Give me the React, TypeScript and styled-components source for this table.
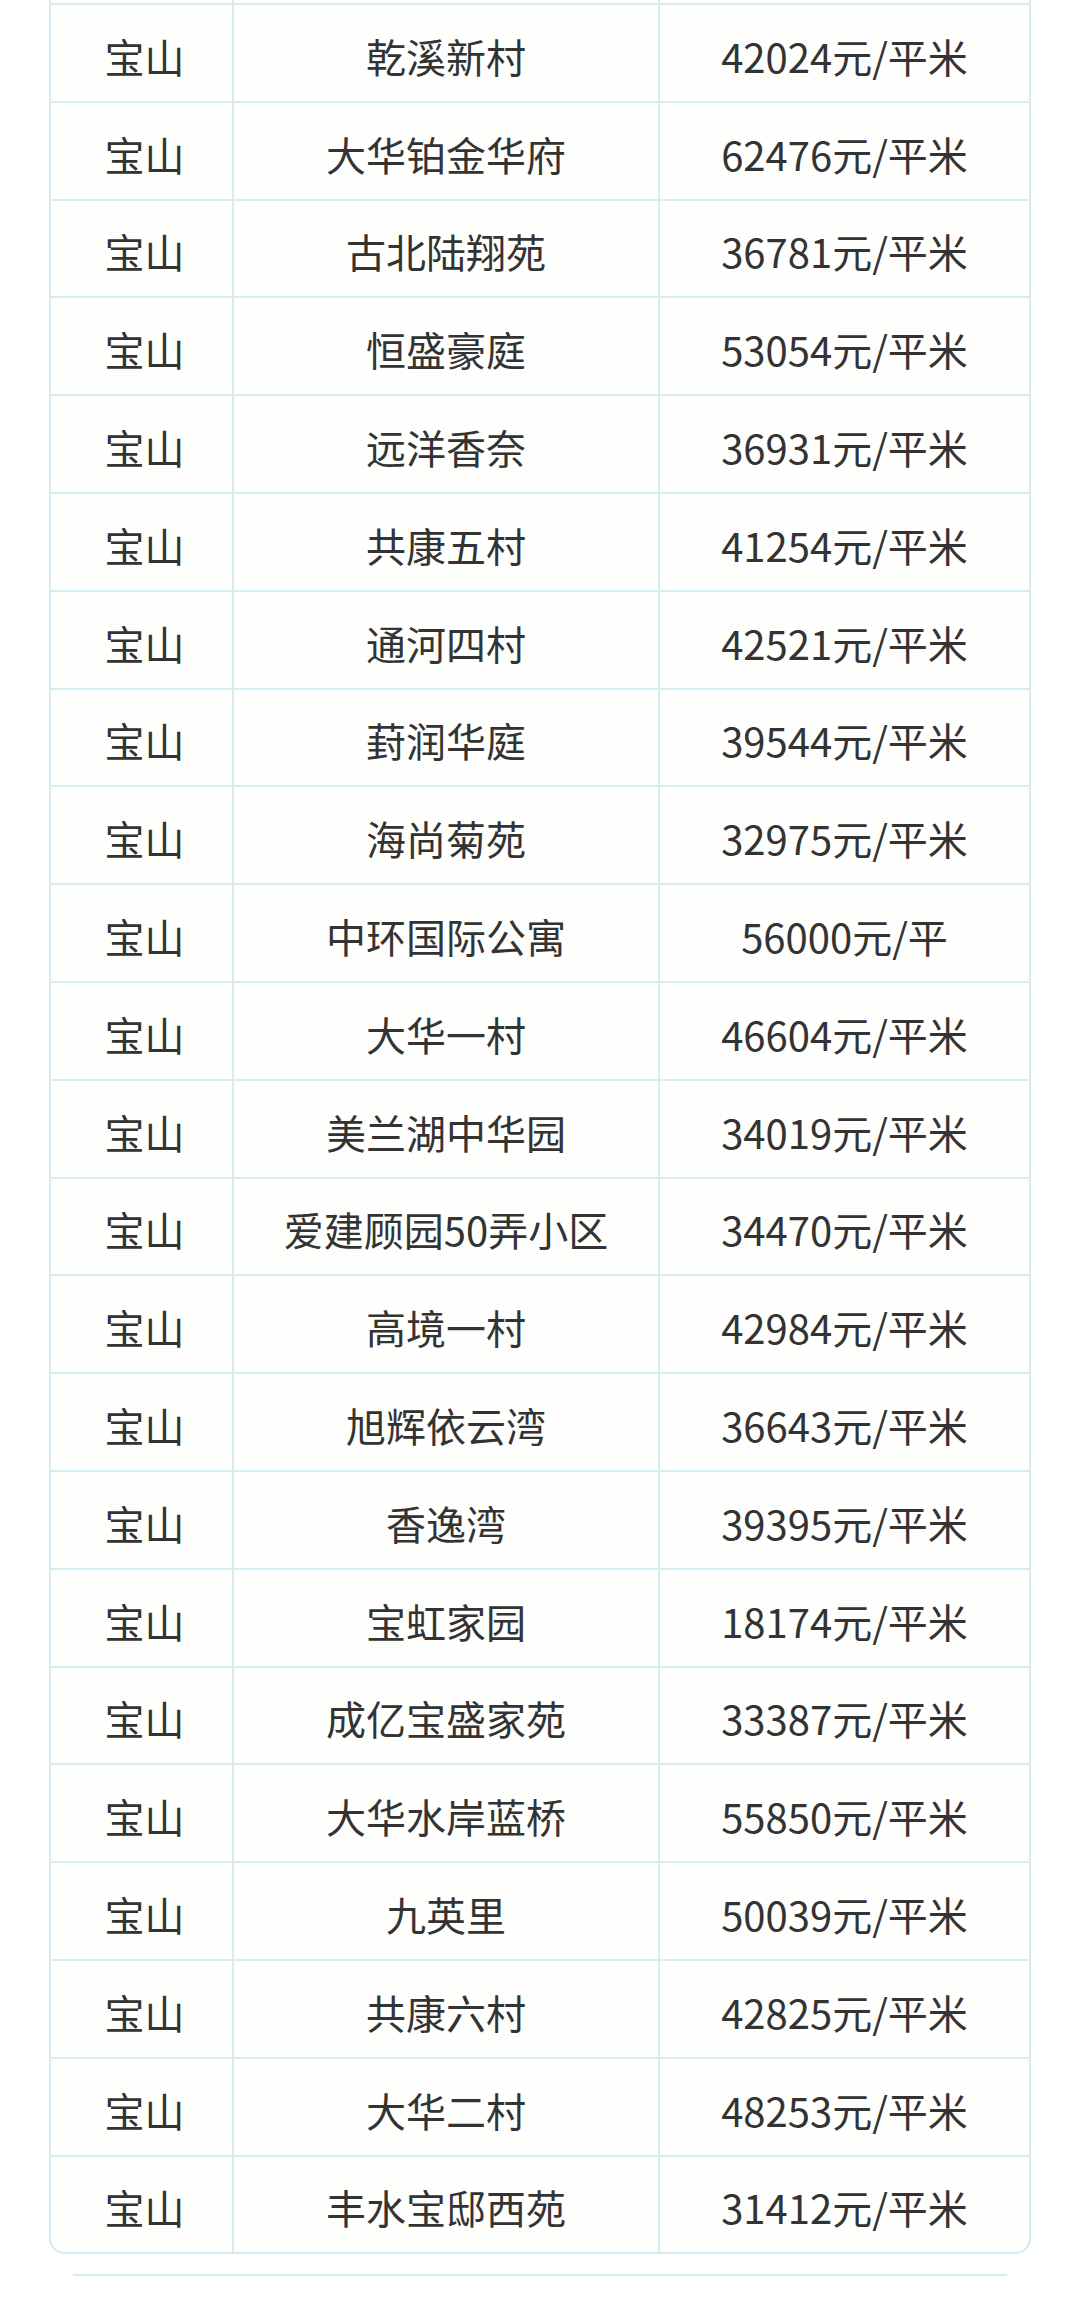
import React from 'react';
import styled, { createGlobalStyle } from 'styled-components';

const GlobalStyle = createGlobalStyle`
	html, body {
		margin: 0;
		padding: 0;
		background: #ffffff;
	}
	body {
		font-family: "Noto Sans CJK SC", "Noto Sans", sans-serif;
		color: #333333;
	}
`;

const LINE = '#d5ecf2';

const rows: [string, string, string][] = [
	['宝山', '乾溪新村', '42024元/平米'],
	['宝山', '大华铂金华府', '62476元/平米'],
	['宝山', '古北陆翔苑', '36781元/平米'],
	['宝山', '恒盛豪庭', '53054元/平米'],
	['宝山', '远洋香奈', '36931元/平米'],
	['宝山', '共康五村', '41254元/平米'],
	['宝山', '通河四村', '42521元/平米'],
	['宝山', '葑润华庭', '39544元/平米'],
	['宝山', '海尚菊苑', '32975元/平米'],
	['宝山', '中环国际公寓', '56000元/平'],
	['宝山', '大华一村', '46604元/平米'],
	['宝山', '美兰湖中华园', '34019元/平米'],
	['宝山', '爱建顾园50弄小区', '34470元/平米'],
	['宝山', '高境一村', '42984元/平米'],
	['宝山', '旭辉依云湾', '36643元/平米'],
	['宝山', '香逸湾', '39395元/平米'],
	['宝山', '宝虹家园', '18174元/平米'],
	['宝山', '成亿宝盛家苑', '33387元/平米'],
	['宝山', '大华水岸蓝桥', '55850元/平米'],
	['宝山', '九英里', '50039元/平米'],
	['宝山', '共康六村', '42825元/平米'],
	['宝山', '大华二村', '48253元/平米'],
	['宝山', '丰水宝邸西苑', '31412元/平米'],
];

const Page = styled.div`
	padding: 0 49px;
`;

const Table = styled.div`
	border: 2px solid ${LINE};
	border-top: none;
	border-radius: 0 0 16px 16px;
	overflow: hidden;
	background: #fefefd;
`;

const Row = styled.div<{ $stub?: boolean }>`
	display: grid;
	grid-template-columns: 181px 426px 1fr;
	height: ${(p) => (p.$stub ? '3px' : '95.8px')};
	border-bottom: 2px solid ${LINE};

	&:last-child {
		border-bottom: none;
	}
`;

const Cell = styled.div`
	display: flex;
	align-items: center;
	justify-content: center;
	padding-top: 6px;
	box-sizing: border-box;
	font-size: 40px;
	line-height: 1;
	white-space: nowrap;
	overflow: hidden;

	&:first-child {
		padding-left: 6px;
	}

	& + & {
		border-left: 2px solid ${LINE};
	}
`;

const Divider = styled.div`
	margin: 20px 24px 0 24px;
	height: 2px;
	background: ${LINE};
`;

export default function App() {
	return (
		<>
			<GlobalStyle />
			<Page>
				<Table>
					<Row $stub>
						<Cell />
						<Cell />
						<Cell />
					</Row>
					{rows.map(([district, name, price], i) => (
						<Row key={i}>
							<Cell>{district}</Cell>
							<Cell>{name}</Cell>
							<Cell>{price}</Cell>
						</Row>
					))}
				</Table>
				<Divider />
			</Page>
		</>
	);
}
